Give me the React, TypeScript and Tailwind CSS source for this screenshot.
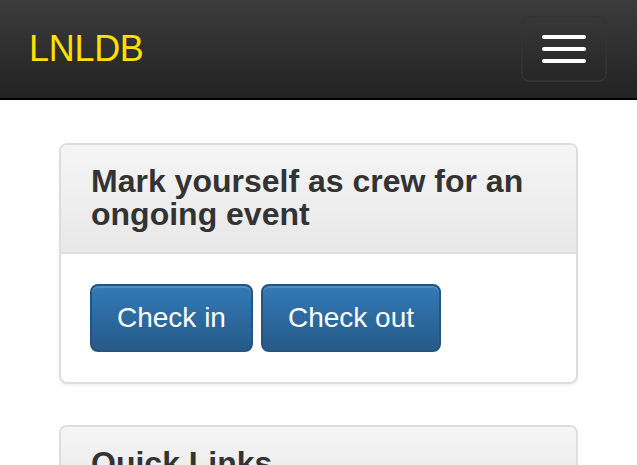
import React from 'react';

const App: React.FC = () => {
  return (
    <div className="min-h-[465px] bg-white" style={{ fontFamily: '"Liberation Sans", Arial, sans-serif' }}>
      {/* Navbar */}
      <nav className="flex h-[100px] items-center justify-between border-b-2 border-black bg-gradient-to-b from-[#3c3c3c] to-[#222222] pl-[29px] pr-[30px]">
        <a className="text-[36px] leading-none tracking-[-0.3px] text-[#ffe000]">LNLDB</a>
        <button className="flex h-[66px] w-[86px] flex-col items-center justify-center gap-2 rounded-lg border-2 border-[#333333]">
          <span className="block h-1 w-11 rounded-sm bg-white" />
          <span className="block h-1 w-11 rounded-sm bg-white" />
          <span className="block h-1 w-11 rounded-sm bg-white" />
        </button>
      </nav>

      {/* Content */}
      <div className="px-[59px] pt-[43px]">
        <div className="mb-[41px] overflow-hidden rounded-lg border-2 border-[#dddddd] shadow-[0_2px_3px_rgba(0,0,0,0.05)]">
          <div className="border-b-2 border-[#dddddd] bg-gradient-to-b from-[#f5f5f5] to-[#e8e8e8] px-[30px] pt-5 pb-[21px]">
            <h3 className="text-[32px] font-bold leading-[33px] text-[#333333]">
              Mark yourself as crew for an ongoing event
            </h3>
          </div>
          <div className="flex gap-2 px-[29px] py-[30px]">
            <button className="h-[68px] rounded-lg border-2 border-[#245580] bg-gradient-to-b from-[#337ab7] to-[#265a88] px-[25px] text-[28px] text-white shadow-[inset_0_2px_0_rgba(255,255,255,0.15)]">
              Check in
            </button>
            <button className="h-[68px] rounded-lg border-2 border-[#245580] bg-gradient-to-b from-[#337ab7] to-[#265a88] px-[25px] text-[28px] text-white shadow-[inset_0_2px_0_rgba(255,255,255,0.15)]">
              Check out
            </button>
          </div>
        </div>

        <div className="overflow-hidden rounded-lg border-2 border-[#dddddd]">
          <div className="border-b-2 border-[#dddddd] bg-gradient-to-b from-[#f5f5f5] to-[#e8e8e8] px-[30px] py-5">
            <h3 className="text-[32px] font-bold leading-[33px] text-[#333333]">Quick Links</h3>
          </div>
          <div className="h-[100px] p-[30px]" />
        </div>
      </div>
    </div>
  );
};

export default App;
